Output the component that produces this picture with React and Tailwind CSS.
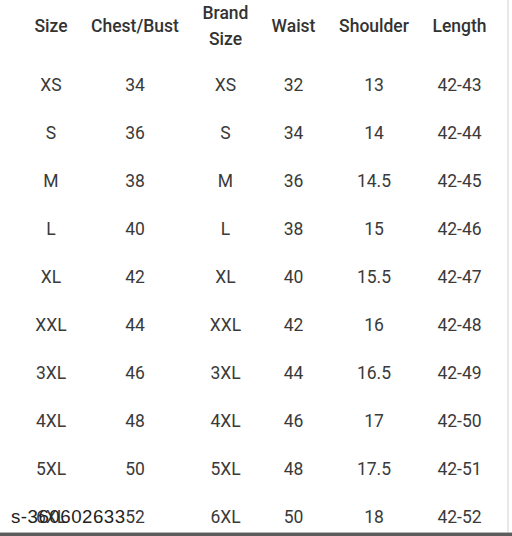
import React from "react";

const headers = ["Size", "Chest/Bust", "Brand Size", "Waist", "Shoulder", "Length"];

const rows = [
  ["XS", "34", "XS", "32", "13", "42-43"],
  ["S", "36", "S", "34", "14", "42-44"],
  ["M", "38", "M", "36", "14.5", "42-45"],
  ["L", "40", "L", "38", "15", "42-46"],
  ["XL", "42", "XL", "40", "15.5", "42-47"],
  ["XXL", "44", "XXL", "42", "16", "42-48"],
  ["3XL", "46", "3XL", "44", "16.5", "42-49"],
  ["4XL", "48", "4XL", "46", "17", "42-50"],
  ["5XL", "50", "5XL", "48", "17.5", "42-51"],
  ["6XL", "52", "6XL", "50", "18", "42-52"],
];

const cols = "grid grid-cols-[86px_82px_99px_37px_124px_47px]";

export default function App() {
  return (
    <div
      className="relative w-[512px] h-[536px] bg-white overflow-hidden flex flex-col"
      style={{ fontFamily: "Roboto, 'Noto Sans', sans-serif" }}
    >
      <div className="flex-1 flex overflow-hidden">
        <div className="w-[507px] pl-[8px] overflow-hidden">
          {/* header */}
          <div className={`${cols} h-[49px] text-[17.5px] font-medium text-[#333]`}>
            {headers.map((h) => (
              <div key={h} className="flex items-center justify-center">
                {h === "Brand Size" ? (
                  <span className="text-center leading-[26px]">
                    Brand
                    <br />
                    Size
                  </span>
                ) : (
                  <span className="whitespace-nowrap">{h}</span>
                )}
              </div>
            ))}
          </div>

          {/* body */}
          <div className="mt-[12px]">
            {rows.map((r, i) => (
              <div key={i} className={`${cols} h-[48px] text-[17.5px] text-[#3a3a3a]`}>
                {r.map((c, j) => (
                  <div key={j} className="flex items-center justify-center">
                    <span className="whitespace-nowrap">{c}</span>
                  </div>
                ))}
              </div>
            ))}
          </div>
        </div>
        <div className="w-[2px] bg-[#e8e8e8]" />
        <div className="flex-1" />
      </div>

      <div className="h-[1px] bg-[#b5b5b5]" />
      <div className="h-[3px] bg-[#5c5c5c]" />

      {/* watermark */}
      <div
        className="absolute left-[11px] top-[493px] h-[48px] flex items-center text-[18.7px] tracking-[0.5px] text-[#222] whitespace-nowrap"
        style={{ fontFamily: "'Liberation Sans', Arial, sans-serif" }}
      >
        s-360602633
      </div>
    </div>
  );
}
